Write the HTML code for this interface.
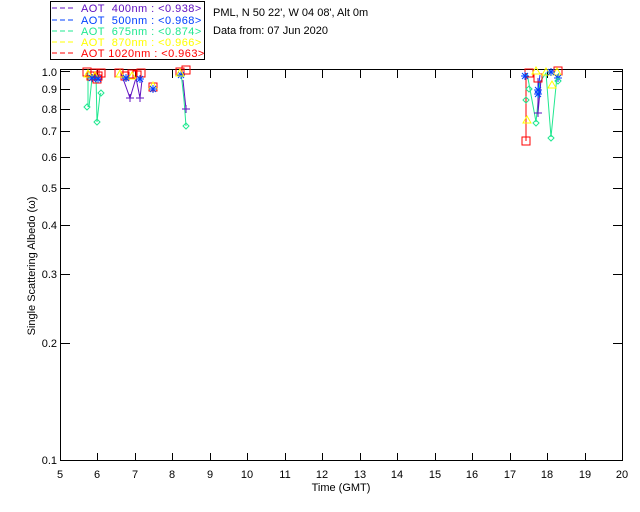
<!DOCTYPE html>
<html><head><style>
html,body{margin:0;padding:0;background:#fff;width:640px;height:512px;overflow:hidden}
svg{display:block}
text{font-family:"Liberation Sans",sans-serif;font-size:11px}
.lg{letter-spacing:0.45px}
</style></head><body>
<svg width="640" height="512" viewBox="0 0 640 512" xmlns="http://www.w3.org/2000/svg">
<defs>
<g id="sq"><rect x="-4" y="-4" width="8" height="8" fill="none" stroke="#f00" stroke-width="1"/></g>
<g id="tri"><path d="M0 -4 L4 3 L-4 3 Z" fill="none" stroke="#ff0"/></g>
<g id="star" stroke="#0040ff"><path d="M-4 0H4M0-4V4M-3-3L3 3M-3 3L3-3"/></g>
<g id="dia"><path d="M0 -3 L3 0 L0 3 L-3 0 Z" fill="none" stroke="#20e890"/></g>
<g id="cr" stroke="#6010c0"><path d="M-4 0H4M0-4V4"/></g>
</defs>
<rect x="50.5" y="1.5" width="154" height="58" fill="#fff" stroke="#000"/>
<g class="lg">
<line x1="52" y1="8" x2="75" y2="8" stroke="#6010c0" stroke-dasharray="5,3"/>
<text x="81" y="12" fill="#6010c0" xml:space="preserve">AOT  400nm : &lt;0.938&gt;</text>
<line x1="52" y1="20" x2="75" y2="20" stroke="#0040ff" stroke-dasharray="5,3"/>
<text x="81" y="24" fill="#0040ff" xml:space="preserve">AOT  500nm : &lt;0.968&gt;</text>
<line x1="52" y1="31" x2="75" y2="31" stroke="#20e890" stroke-dasharray="5,3"/>
<text x="81" y="35" fill="#20e890" xml:space="preserve">AOT  675nm : &lt;0.874&gt;</text>
<line x1="52" y1="42" x2="75" y2="42" stroke="#ff0" stroke-dasharray="5,3"/>
<text x="81" y="46" fill="#ff0" xml:space="preserve">AOT  870nm : &lt;0.966&gt;</text>
<line x1="52" y1="53" x2="75" y2="53" stroke="#f00" stroke-dasharray="5,3"/>
<text x="81" y="57" fill="#f00" xml:space="preserve">AOT 1020nm : &lt;0.963&gt;</text>
</g>
<text x="213" y="16">PML, N 50 22', W 04 08', Alt 0m</text>
<text x="213" y="34">Data from: 07 Jun 2020</text>
<g shape-rendering="crispEdges">
<rect x="60.5" y="69.5" width="562" height="391" fill="none" stroke="#000"/>
<g stroke="#000">
<path d="M97.5 461V453M135.5 461V453M172.5 461V453M210.5 461V453M247.5 461V453M285.5 461V453M322.5 461V453M360.5 461V453M397.5 461V453M435.5 461V453M472.5 461V453M510.5 461V453M547.5 461V453M585.5 461V453"/>
<path d="M97.5 70V78M135.5 70V78M172.5 70V78M210.5 70V78M247.5 70V78M285.5 70V78M322.5 70V78M360.5 70V78M397.5 70V78M435.5 70V78M472.5 70V78M510.5 70V78M547.5 70V78M585.5 70V78"/>
<path d="M60 71.5H70M60 89.5H70M60 109.5H70M60 131.5H70M60 157.5H70M60 188.5H70M60 225.5H70M60 274.5H70M60 343.5H70"/>
<path d="M623 71.5H613M623 89.5H613M623 109.5H613M623 131.5H613M623 157.5H613M623 188.5H613M623 225.5H613M623 274.5H613M623 343.5H613"/>
</g>
</g>
<g text-anchor="end">
<text x="57" y="76">1.0</text><text x="57" y="93">0.9</text><text x="57" y="113">0.8</text>
<text x="57" y="135">0.7</text><text x="57" y="161">0.6</text><text x="57" y="192">0.5</text>
<text x="57" y="229">0.4</text><text x="57" y="278">0.3</text><text x="57" y="347">0.2</text>
<text x="57" y="464">0.1</text>
</g>
<g text-anchor="middle">
<text x="60" y="478">5</text><text x="97" y="478">6</text><text x="135" y="478">7</text><text x="172" y="478">8</text><text x="210" y="478">9</text><text x="247" y="478">10</text><text x="285" y="478">11</text><text x="322" y="478">12</text><text x="360" y="478">13</text><text x="397" y="478">14</text><text x="435" y="478">15</text><text x="472" y="478">16</text><text x="510" y="478">17</text><text x="547" y="478">18</text><text x="585" y="478">19</text><text x="622" y="478">20</text>
<text x="341" y="491">Time (GMT)</text>
</g>
<text transform="translate(35,266) rotate(-90)" text-anchor="middle">Single Scattering Albedo (ω)</text>
<g fill="none" stroke-width="1">
<path d="M88 73L88 107M89 107L92 78" stroke="#20e890"/>
<path d="M96 75L97 122L100 95L101 93" stroke="#20e890"/>
<path d="M121 73L130 98L136 78L140 98L142 80" stroke="#6010c0"/>
<path d="M181 72L184 100L186 126" stroke="#20e890"/>
<path d="M183 80L186 109" stroke="#6010c0"/>
<path d="M526 73L526 141" stroke="#f00"/>
<path d="M527 73L536 122L540 82L546 73L551 137L557 76L559 73" stroke="#20e890"/>
<path d="M538 78L538 113L541 80" stroke="#6010c0"/>
<path d="M540 75L538 90" stroke="#0040ff"/>
</g>
<use href="#sq" x="87" y="72"/><use href="#sq" x="91" y="76"/><use href="#sq" x="95" y="73"/><use href="#sq" x="98" y="76"/><use href="#sq" x="101" y="73"/><use href="#sq" x="97" y="79"/>
<use href="#tri" x="88" y="74"/><use href="#tri" x="95" y="76"/><use href="#star" x="92" y="78"/><use href="#star" x="98" y="79"/>
<use href="#dia" x="87" y="107"/><use href="#dia" x="97" y="122"/><use href="#dia" x="101" y="93"/>
<use href="#sq" x="119" y="73"/><use href="#sq" x="125" y="76"/><use href="#sq" x="132" y="74"/><use href="#sq" x="137" y="75"/><use href="#sq" x="141" y="73"/>
<use href="#tri" x="120" y="74"/><use href="#tri" x="132" y="76"/><use href="#star" x="140" y="79"/><use href="#star" x="126" y="78"/>
<use href="#cr" x="130" y="98"/><use href="#cr" x="140" y="98"/>
<use href="#sq" x="153" y="87"/><use href="#tri" x="153" y="86"/><use href="#star" x="153" y="89"/>
<use href="#sq" x="180" y="72"/><use href="#sq" x="186" y="70"/><use href="#star" x="181" y="75"/><use href="#tri" x="180" y="73"/>
<use href="#cr" x="186" y="109"/><use href="#dia" x="186" y="126"/>
<use href="#sq" x="529" y="73"/><use href="#sq" x="538" y="78"/><use href="#sq" x="558" y="71"/><use href="#sq" x="526" y="141"/>
<use href="#tri" x="536" y="71"/><use href="#tri" x="546" y="72"/><use href="#tri" x="552" y="85"/><use href="#tri" x="527" y="120"/><use href="#tri" x="557" y="72"/>
<use href="#star" x="525" y="76"/><use href="#star" x="538" y="90"/><use href="#star" x="538" y="94"/><use href="#star" x="551" y="72"/><use href="#star" x="558" y="78"/>
<use href="#cr" x="538" y="113"/>
<use href="#dia" x="529" y="89"/><use href="#dia" x="526" y="100"/><use href="#dia" x="536" y="123"/><use href="#dia" x="551" y="138"/><use href="#dia" x="558" y="81"/>
</svg>
</body></html>
